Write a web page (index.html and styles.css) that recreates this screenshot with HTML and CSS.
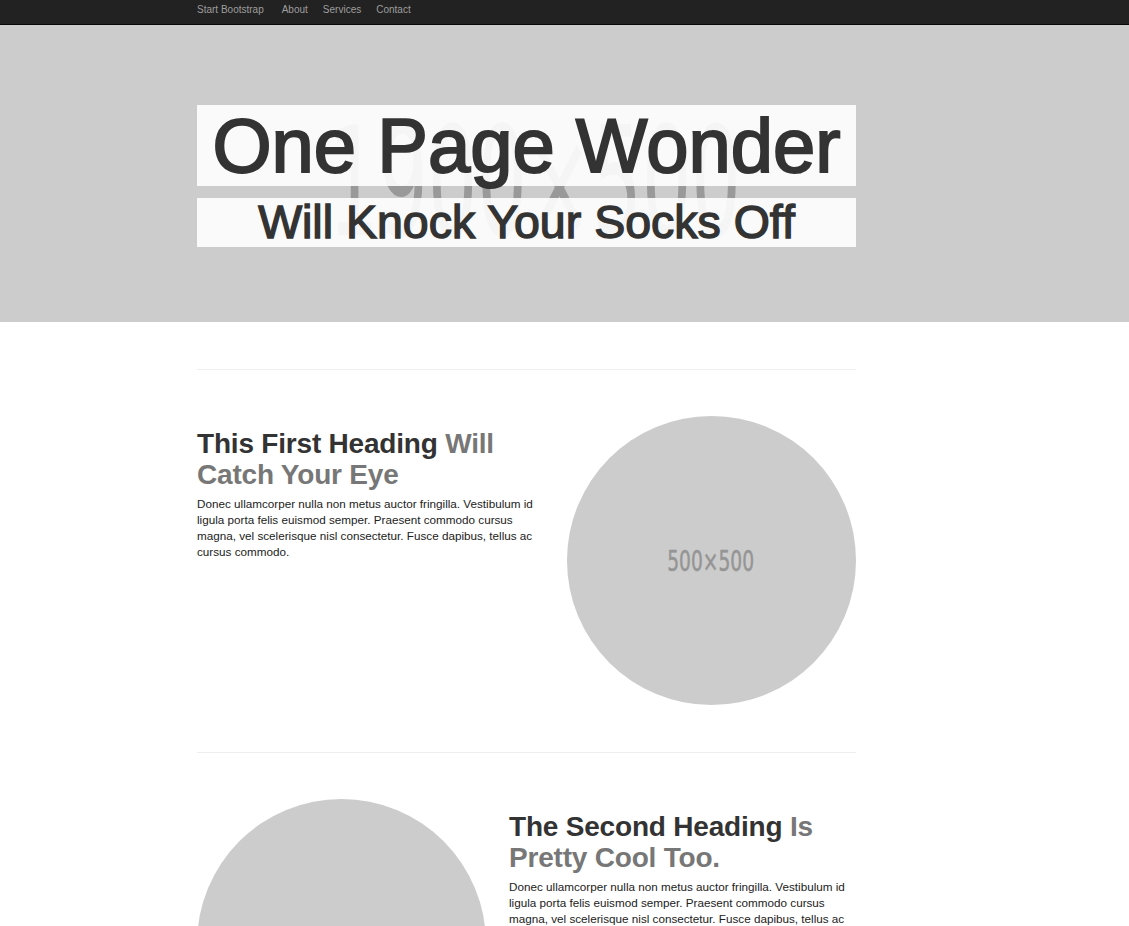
FILE: index.html
```html
<!DOCTYPE html>
<html lang="en">
<head>
<meta charset="utf-8">
<title>One Page Wonder</title>
<link rel="stylesheet" href="styles.css">
</head>
<body>
<nav class="navbar">
  <div class="container nav-inner">
    <a class="brand" href="#">Start Bootstrap</a>
    <a class="nav-link" href="#">About</a>
    <a class="nav-link" href="#">Services</a>
    <a class="nav-link" href="#">Contact</a>
  </div>
</nav>
<header class="header-image">
  <div class="ghost"><span class="ghost-text">1900×500</span></div>
  <div class="container headline">
    <h1>One Page Wonder</h1>
    <h2>Will Knock Your Socks Off</h2>
  </div>
</header>
<main class="container">
  <hr class="divider">
  <section class="featurette">
    <div class="feat-text">
      <h2 class="feat-heading">This First Heading <span class="muted">Will Catch Your Eye</span></h2>
      <p class="lead">Donec ullamcorper nulla non metus auctor fringilla. Vestibulum id ligula porta felis euismod semper. Praesent commodo cursus magna, vel scelerisque nisl consectetur. Fusce dapibus, tellus ac cursus commodo.</p>
    </div>
    <div class="circle"><span class="circle-label">500×500</span></div>
  </section>
  <hr class="divider">
  <section class="featurette">
    <div class="circle"><span class="circle-label">500×500</span></div>
    <div class="feat-text">
      <h2 class="feat-heading">The Second Heading <span class="muted">Is Pretty Cool Too.</span></h2>
      <p class="lead">Donec ullamcorper nulla non metus auctor fringilla. Vestibulum id ligula porta felis euismod semper. Praesent commodo cursus magna, vel scelerisque nisl consectetur. Fusce dapibus, tellus ac cursus commodo.</p>
    </div>
  </section>
</main>
</body>
</html>
```
FILE: styles.css
```css
html, body {
  margin: 0;
  padding: 0;
}
body {
  font-family: "Liberation Sans", Arial, sans-serif;
  color: #333;
  background: #fff;
}
.container {
  margin-left: 197px;
  width: 659px;
}
.navbar {
  background: #222;
  border-bottom: 1px solid #080808;
  height: 24px;
}
.nav-inner {
  display: flex;
  align-items: center;
  height: 24px;
}
.navbar a {
  color: #9d9d9d;
  text-decoration: none;
  font-size: 10px;
  line-height: 12px;
  margin-top: -5px;
}
.brand {
  margin-right: 18px;
}
.nav-link {
  margin-right: 15px;
}
.header-image {
  position: relative;
  background: #ccc;
  height: 297px;
  overflow: hidden;
}
.ghost {
  position: absolute;
  left: 0;
  top: 68px;
  width: 1070px;
  display: flex;
  justify-content: center;
}
.ghost-text {
  display: inline-block;
  font-family: "DejaVu Sans", sans-serif;
  font-stretch: condensed;
  font-size: 152px;
  line-height: 180px;
  color: #999;
  transform: scaleX(0.57);
}
.headline {
  position: relative;
  padding-top: 80px;
}
.headline h1 {
  margin: 0;
  font-size: 76px;
  line-height: 81px;
  font-weight: normal;
  text-align: center;
  background: rgba(255, 255, 255, 0.9);
  color: #333;
  -webkit-text-stroke: 2px #333;
}
.headline h2 {
  margin: 12px 0 0;
  font-size: 46.5px;
  line-height: 49px;
  font-weight: normal;
  text-align: center;
  background: rgba(255, 255, 255, 0.9);
  color: #333;
  -webkit-text-stroke: 1.4px #333;
}
.divider {
  margin: 47px 0 0;
  border: 0;
  border-top: 1px solid #eee;
  height: 0;
}
.featurette {
  display: flex;
  gap: 23px;
  margin-top: 46px;
}
.feat-text {
  flex: 1;
  min-width: 0;
}
.feat-heading {
  margin: 12px 0 6px;
  font-size: 28px;
  line-height: 31px;
  font-weight: bold;
  letter-spacing: -0.2px;
  color: #333;
}
.muted {
  color: #777;
}
.lead {
  margin: 0;
  font-size: 11.7px;
  line-height: 16px;
  color: #222;
}
.circle {
  flex: 0 0 289px;
  width: 289px;
  height: 289px;
  border-radius: 50%;
  background: #ccc;
  display: flex;
  align-items: center;
  justify-content: center;
}
.circle-label {
  display: inline-block;
  font-family: "DejaVu Sans", sans-serif;
  font-stretch: condensed;
  font-size: 28px;
  color: #959595;
  transform: scaleX(0.74);
  margin-left: -1px;
  margin-top: 2px;
  -webkit-text-stroke: 0.5px #959595;
}
```
